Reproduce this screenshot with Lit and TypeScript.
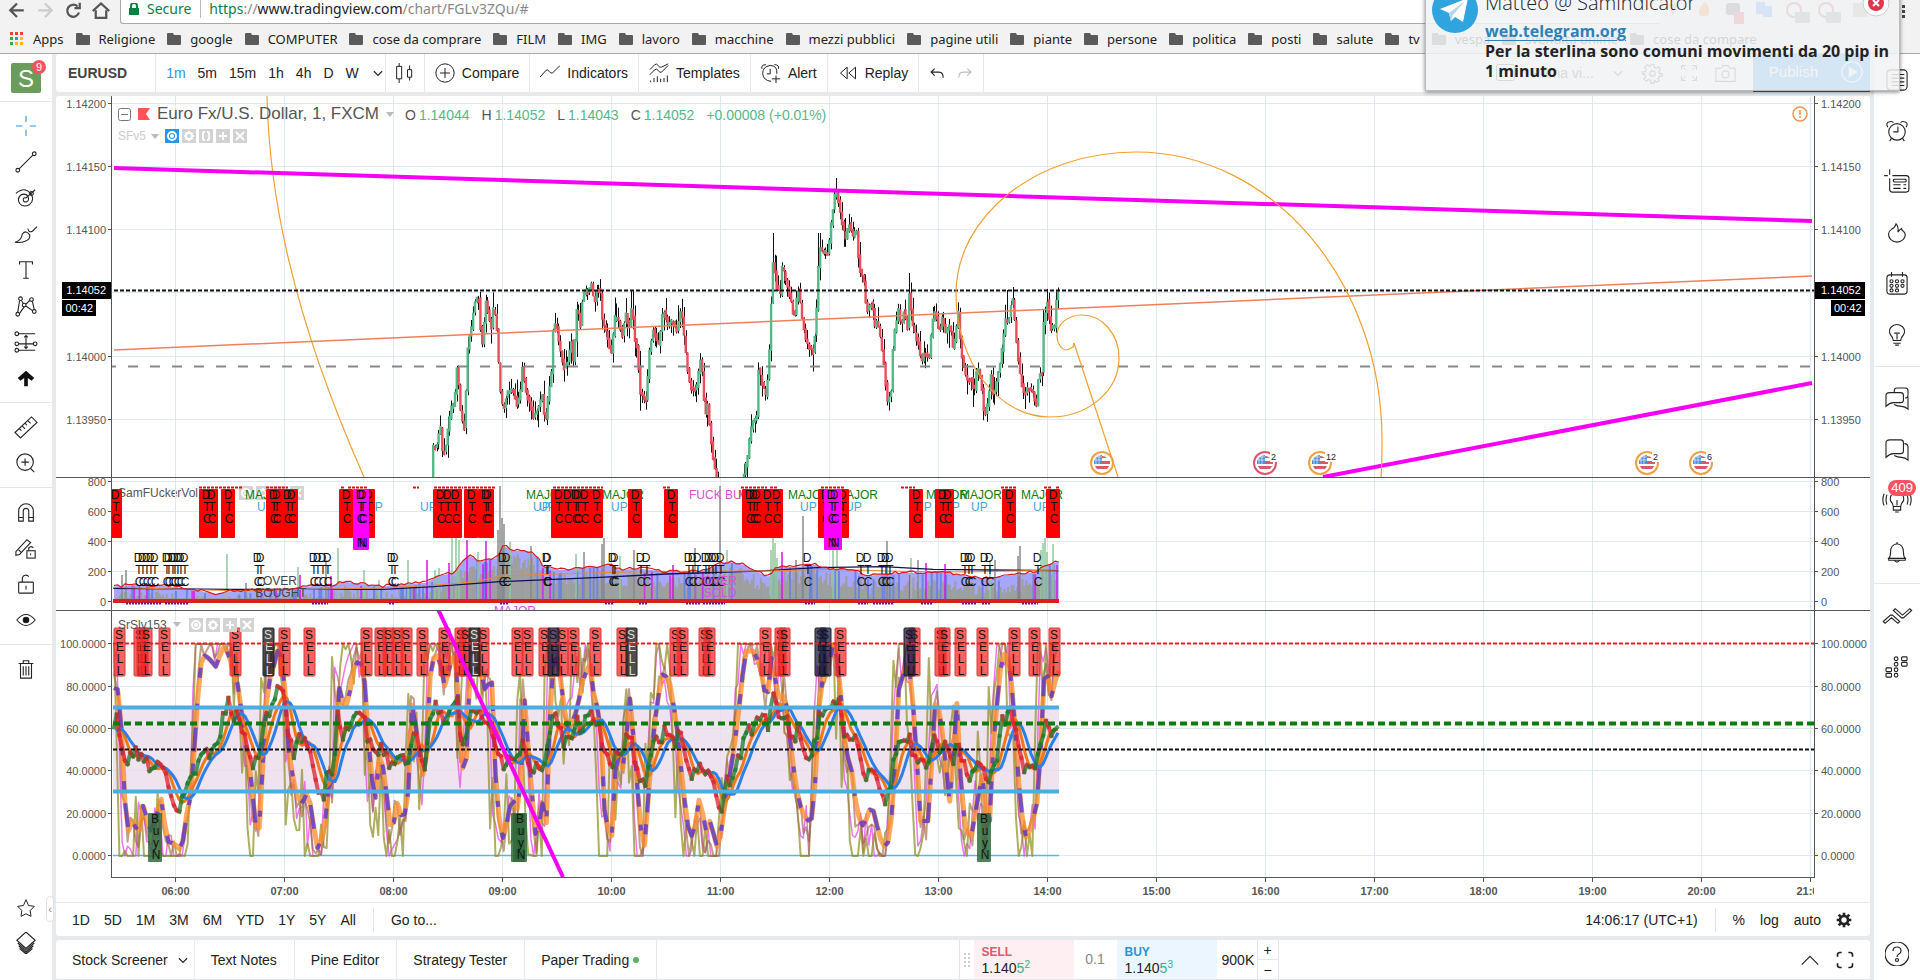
import { LitElement, html, svg, css } from "lit";
import { customElement, property } from "lit/decorators.js";
import { classMap } from "lit/directives/class-map.js";

type Pt = [number, number];

const MINUTE = 109 / 60;
const HOUR_X = Array.from({ length: 16 }, (_, i) => 175.5 + i * 109);
const PLOT_LEFT = 112;
const LAST_X = 1059;

/** Turns a flat list of x, y numbers into points. */
const pairs = (flat: number[]): Pt[] => {
  const out: Pt[] = [];
  for (let i = 0; i < flat.length; i += 2) out.push([flat[i], flat[i + 1]]);
  return out;
};

/** Indicator series are stored on a grid three times finer than the plot. */
const fine = (flat: number[], start: number): Pt[] =>
  pairs(flat).map(([x, y]) => [start + x / 3, 470 + y / 3]);

const sample = (pts: Pt[], x: number): number => {
  if (x <= pts[0][0]) return pts[0][1];
  for (let i = 1; i < pts.length; i++) {
    if (x <= pts[i][0]) {
      const [ax, ay] = pts[i - 1];
      const [bx, by] = pts[i];
      return ay + ((by - ay) * (x - ax)) / (bx - ax || 1);
    }
  }
  return pts[pts.length - 1][1];
};

/** Repeatable noise in 0..1. */
const noise = (seed: number) => {
  let s = seed;
  return () => {
    s = (s * 1664525 + 1013904223) % 4294967296;
    return s / 4294967296;
  };
};

const toPath = (pts: Pt[]) =>
  pts.map(([x, y], i) => `${i ? "L" : "M"}${x.toFixed(1)} ${y.toFixed(1)}`).join("");

const steps = (from: number, to: number, by: number) => {
  const xs: number[] = [];
  for (let x = from; x <= to; x += by) xs.push(x);
  return xs;
};

/* ---------- price series ---------- */
const PRICE = pairs([
  432,477, 433,447, 436,447, 440,425, 442,452, 445,450, 448,427, 451,408, 454,405, 457,363, 460,410, 463,427, 465,427,
  466,375, 468,340, 471,330, 474,302, 479,298, 481,345, 483,342, 485,298, 488,313, 491,328, 493,310, 496,318, 498,357,
  500,390, 503,412, 506,395, 510,390, 513,390, 517,405, 520,393, 522,367, 526,393, 531,407, 533,417, 538,407, 542,395,
  545,425, 548,395, 552,367, 553,327, 556,323, 559,347, 564,368, 568,360, 571,340, 573,362, 575,337, 577,303, 580,327,
  582,300, 585,290, 588,292, 591,284, 594,305, 597,287, 600,292, 602,320, 606,333, 611,353, 615,315, 619,323, 622,335,
  625,312, 629,327, 632,302, 634,337, 637,348, 640,393, 646,400, 649,352, 653,328, 658,347, 663,308, 667,323, 673,322,
  676,332, 681,308, 684,340, 687,367, 690,387, 696,390, 700,360, 702,373, 705,418, 707,402, 710,433, 713,460, 716,477,
  722,520, 738,520, 743,477, 747,460, 750,432, 754,417, 756,427, 758,368, 761,380, 766,398, 769,352, 771,300, 773,257,
  776,285, 780,295, 782,265, 786,283, 790,297, 794,318, 798,288, 802,320, 806,343, 813,352, 816,317, 819,247, 823,253,
  828,253, 831,223, 834,197, 837,193, 840,213, 845,240, 849,223, 853,238, 856,228, 859,267, 864,283, 866,312, 872,300,
  874,328, 877,320, 881,345, 884,367, 887,402, 891,390, 893,340, 898,310, 901,327, 904,307, 907,330, 909,293, 913,330,
  918,342, 921,363, 924,352, 929,357, 932,323, 935,310, 939,333, 942,317, 945,333, 950,325, 953,352, 958,313, 961,353,
  966,380, 971,378, 974,393, 977,367, 981,380, 983,407, 986,415, 991,373, 993,398, 997,377, 1001,357, 1005,320, 1008,322,
  1012,295, 1016,340, 1020,377, 1024,395, 1028,387, 1033,393, 1036,407, 1039,363, 1041,390, 1043,327, 1047,300, 1050,328,
  1055,327, 1056,300, 1058,292,
]);

const TALL_WICKS: Record<number, number> = { 773: 233, 837: 178, 819: 233, 909: 273, 632: 290, 1012: 287, 1047: 289, 1007: 290 };

const candles = () => {
  const rnd = noise(11);
  const sticks = steps(433, 1058, MINUTE).map((x) => {
    const open = sample(PRICE, x - MINUTE);
    const close = sample(PRICE, x) + (rnd() - 0.5) * 5;
    const top = Math.min(open, close) - 1;
    const h = Math.max(4, Math.abs(open - close) + 2);
    let hi = top - rnd() * rnd() * 18;
    const lo = top + h + rnd() * rnd() * 18;
    for (const k of Object.keys(TALL_WICKS)) if (Math.abs(Number(k) - x) < 1) hi = Math.min(hi, TALL_WICKS[Number(k)]);
    return { x, top, h, hi, lo, up: close < open };
  });
  return svg`
    ${sticks.map((s) => svg`<path class="wick" d="M${Math.round(s.x) + 0.5} ${s.hi.toFixed(1)}V${s.lo.toFixed(1)}"></path>`)}
    ${sticks.map((s) => svg`<rect class=${s.up ? "up" : "down"} x=${(s.x - 1).toFixed(1)} y=${s.top.toFixed(1)} width="2.400" height=${s.h.toFixed(1)}></rect>`)}`;
};

const SPIRAL =
  "M1381 477C1382 465 1382 452 1382 440C1382 281 1272 152 1136 152C1036 152 956 216 956 294C956 362 998 417 1050 417" +
  "C1088 417 1119 391 1119 358C1119 334 1102 315 1082 315C1068 315 1057 324 1057 335C1057 343 1061 350 1067 350L1073 347L1074 343";

/* ---------- volume pane ---------- */
const VOLUME: Pt[] = [
  ...fine([40,350,100,345,200,348,300,362,345,373,400,362,550,360,600,350,700,345,730,335,850,350,880,345,980,338,1010,318,
    1060,310,1090,270,1110,258,1140,275,1190,265,1210,228,1240,240,1290,245,1310,260,1330,290,1380,300,1450,293,1500,290], 100),
  ...fine([30,285,60,300,110,295,200,305,300,305,380,275,420,280,480,310,510,322,530,290,600,290,640,282,700,300,760,300,
    800,318,870,310,950,308,1030,305,1090,318,1150,325,1240,315,1310,305,1340,285,1375,275], 600),
];
const SLOW_VOLUME: Pt[] = [
  ...fine([40,355,400,358,850,358,1000,350,1200,335,1500,322], 100),
  ...fine([200,312,500,302,650,293,850,290,1000,298,1375,302], 600),
];
const MID_VOLUME: Pt[] = [
  ...fine([40,352,400,362,850,354,1000,346,1130,335,1200,318,1500,308], 100),
  ...fine([200,304,500,303,700,298,900,304,1100,306,1375,300], 600),
];
const SPIKES: [number, number, string][] = [
  [500,486,"grey"],[498,530,"grey"],[502,518,"grey"],[504,524,"grey"],[720,486,"grey"],[803,516,"grey"],[122,575,"grey"],[126,570,"grey"],
  [227,554,"green"],[246,583,"grey"],[298,567,"green"],[338,548,"green"],[364,570,"green"],[379,580,"green"],[408,560,"green"],[427,560,"mag"],
  [435,570,"green"],[439,568,"green"],[452,538,"green"],[456,534,"green"],[459,540,"green"],[467,540,"mag"],[486,541,"mag"],[478,552,"green"],
  [510,542,"green"],[531,546,"grey"],[576,554,"green"],[584,552,"grey"],[326,560,"grey"],[331,576,"mag"],[449,563,"mag"],[300,575,"mag"],
  [602,544,"grey"],[604,538,"grey"],[620,556,"green"],[634,550,"grey"],[673,565,"mag"],[695,548,"grey"],[727,550,"green"],[771,550,"green"],
  [773,538,"green"],[775,543,"green"],[777,558,"green"],[782,552,"mag"],[796,560,"grey"],[833,546,"green"],[837,550,"green"],[887,541,"grey"],
  [911,558,"green"],[918,560,"grey"],[945,564,"mag"],[926,563,"mag"],[1018,556,"grey"],[1020,546,"grey"],[1041,550,"green"],[1043,543,"green"],
  [1045,538,"green"],[1047,552,"green"],[1053,544,"green"],[990,560,"green"],[995,560,"grey"],
];
const RED_RUNS = pairs([199,242,266,288,341,344,348,368,413,419,434,463,464,495,553,603,663,671,741,767,770,778,821,844,901,915,1001,1016,1044,1052,1056,1060]);
const NAVY_RUNS = pairs([126,162,165,188,312,328,389,395,500,508,605,614,639,648,686,700,703,725,805,815,858,868,873,893,921,933,962,976,982,990,1022,1038]);
const runs = (list: Pt[], y: number) => list.map(([a, b]) => `M${a} ${y}H${b}`).join("");

const RED_DTC = [115,206,211,228,273,276,287,291,346,368,440,447,455,471,485,487,558,567,575,577,584,596,635,671,749,753,756,767,776,825,842,916,942,947,1009,1053];
const PLAIN_DTC = [138,142,146,150,154,166,168,172,174,177,180,184,257,260,313,317,322,327,391,394,502,506,546,547,612,614,640,646,688,692,697,705,708,712,715,720,807,860,867,881,885,889,964,968,971,984,989,1037];
const MAJOR_UP: [string, number, string][] = [
  ["MAJOR",245,"major"],["MAJOR",526,"major"],["MAJOR",602,"major"],["M",738,"major"],["MAJOR",788,"major"],["MAJOR",836,"major"],
  ["MAJOR",926,"major"],["MAJOR",960,"major"],["MAJOR",1021,"major"],["FUCK BU",689,"violet"],
];
const UPS = [257,366,420,533,539,611,800,845,915,943,971,1033];

const stack = (letters: string, x: number, y: number, cls: string, pitch = 12) =>
  [...letters].map((c, i) => svg`<text class=${cls} x=${x + (i ? 1 : 0)} y=${y + i * pitch}>${c}</text>`);

const volumeBars = () => {
  const rnd = noise(5);
  return steps(115, 1057, MINUTE).map((x) => {
    const env = sample(VOLUME, x);
    const r = rnd();
    const cls = r > 0.975 ? "mag" : r > 0.8 ? "blue" : "olive";
    const top = cls === "olive" ? env + 4 + rnd() * 14 : env + rnd() * 4;
    return svg`<rect class="bar ${cls}" x=${x.toFixed(1)} y=${Math.min(top, 598).toFixed(1)} width="2" height=${Math.max(3, 602 - top).toFixed(1)}></rect>`;
  });
};

/* ---------- oscillator pane ---------- */
const SIGNAL: Pt[] = [
  ...fine([42,780,50,735,60,800,70,850,80,870,95,850,110,840,130,870,150,890,160,910,180,870,195,920,215,980,240,1015,250,960,
    270,940,285,900,300,850,320,850,345,840,358,790,370,740,380,720,385,680,395,730,410,730,425,780,440,820,455,870,470,880,
    480,850,490,790,500,720,510,740,525,690,540,640,550,680,560,750,575,820,585,850,595,810,620,810,635,860,650,940,675,970,
    685,870,700,930,712,720,730,790,750,760,765,750,785,710,800,790,815,810,830,850,850,830,865,880,880,900,890,850,905,850,
    925,890,940,790,950,810,975,880,990,740,1000,715,1020,710,1030,760,1050,720,1070,680,1085,820,1100,770,1110,720,1135,705,
    1150,760,1170,750,1190,830,1210,900,1230,860,1250,880,1265,820,1285,870,1300,900,1320,870,1335,900,1350,780,1365,730,
    1380,770,1395,820,1410,800,1430,750,1440,780,1460,740,1480,740,1500,760], 100),
  ...fine([10,850,35,890,45,820,65,840,80,800,90,790,105,870,125,935,137,935,150,850,165,810,180,820,190,780,205,805,230,820,
    238,780,255,870,275,930,290,900,300,870,315,930,330,900,345,960,360,1040,375,960,380,910,395,940,415,870,435,800,455,770,
    465,780,475,720,490,750,505,760,515,660,540,730,550,715,565,770,585,800,595,770,610,850,635,865,650,800,660,715,680,740,
    700,680,715,690,730,780,750,790,770,820,785,890,800,920,820,900,835,930,860,1000,875,920,885,850,900,820,925,800,945,850,
    965,890,985,870,1000,800,1020,830,1045,820,1060,880,1075,800,1090,880,1110,915,1120,920,1130,860,1145,890,1160,940,
    1175,880,1190,870,1205,760,1230,720,1245,780,1260,860,1275,910,1295,880,1310,890,1325,800,1340,750,1358,800,1372,760], 600),
];
const STOCH: Pt[] = [
  ...fine([45,650,60,660,70,950,85,1080,100,1040,115,1100,130,1000,150,1080,165,1050,185,980,200,1110,225,1120,245,1140,260,1030,
    275,960,290,720,300,590,310,550,330,565,350,590,365,530,385,540,400,610,418,650,430,790,450,880,465,1060,478,1070,490,850,
    503,640,520,590,535,530,550,580,565,830,585,960,605,1000,625,960,640,1060,655,1145,675,1060,690,900,702,960,715,640,
    735,720,750,660,765,570,785,580,795,640,810,880,825,1000,840,830,855,930,875,1100,890,990,910,1055,925,960,938,650,
    950,800,975,950,990,620,1005,540,1020,570,1035,650,1055,560,1070,560,1085,900,1100,860,1110,600,1140,590,1155,660,
    1175,620,1190,1000,1210,1110,1235,980,1260,1030,1270,640,1290,900,1310,1130,1325,980,1340,1060,1355,570,1375,560,
    1390,700,1405,780,1430,720,1450,620,1470,580,1485,700], 100),
  ...fine([0,720,15,1050,35,1100,50,830,70,900,90,680,105,850,120,1060,135,1130,150,900,170,700,190,600,210,640,230,760,250,960,
    270,1110,290,1050,300,960,315,1090,330,1050,355,1140,380,960,400,850,420,690,435,540,460,540,480,580,500,700,515,560,
    535,680,555,670,575,850,595,990,620,1050,640,1040,650,850,660,640,680,610,700,520,715,580,735,830,755,900,770,1020,
    790,1070,815,1000,840,1100,860,1140,880,1000,895,660,925,560,945,760,960,1050,985,1050,1005,700,1020,720,1050,1000,
    1072,680,1085,1000,1110,1120,1130,1000,1150,900,1165,1130,1180,820,1200,600,1215,540,1230,580,1250,830,1260,1000,
    1280,1110,1300,1040,1315,980,1335,570,1355,680,1372,600], 600),
];

const SELLS: [number, string][] = [
  ...[119,139,142,146,164,235,284,309,366,380,388,397,406,422,444,460,465,483,517,527,544,562,573,595,622,675,682,704,709,765,
    780,784,840,914,940,944,960,982,1014,1034,1054].map((x): [number, string] => [x, "sell"]),
  [268,"sell black"],[474,"sell black"],[553,"sell navy"],[631,"sell black"],[820,"sell navy"],[825,"sell navy"],[909,"sell navy"],
];
const BUYS = [155, 518, 520, 984];

const fastLine = (seed: number, lead: number, gain: number, jitter: number): Pt[] => {
  const rnd = noise(seed);
  return steps(114, LAST_X, MINUTE * 1.5).map((x): Pt => {
    const y = 748 + (sample(STOCH, x + lead) - 748) * gain + (rnd() - 0.5) * jitter;
    return [x, Math.max(643, Math.min(855, y))];
  });
};

const average = (x: number, back: number): number => {
  let sum = 0;
  for (let i = 0; i < 12; i++) sum += sample(SIGNAL, x - (back * i) / 12);
  return sum / 12;
};

const signalSegments = () => {
  const rnd = noise(23);
  const pts = steps(114, LAST_X, MINUTE * 1.5).map((x): Pt => [x, sample(SIGNAL, x) + (rnd() - 0.5) * 14]);
  return pts.slice(1).map((p, i) =>
    svg`<path class=${p[1] < pts[i][1] ? "signal rise" : "signal fall"} d=${toPath([pts[i], p])}></path>`);
};

const PRICES: [string, number][] = [["1.14200",104],["1.14150",167],["1.14100",230],["1.14000",357],["1.13950",420]];
const VOLS: [string, number][] = [["800",482],["600",512],["400",542],["200",572],["0",602]];
const OSCS: [string, number][] = [["100.0000",643],["80.0000",686],["60.0000",728],["40.0000",770],["20.0000",813],["0.0000",855]];

const axis = (side: "left" | "right", ticks: [string, number][], top: number, priceTag = false) => svg`
  <g transform="translate(0 ${-top})">
    ${ticks.map(([t, y]) => side === "left"
      ? svg`<text class="tick end" x="50" y=${y + 4}>${t}</text><path class="mark" d="M52 ${y - 0.5}h3"></path>`
      : svg`<text class="tick" x="6" y=${y + 4}>${t}</text><path class="mark" d="M0 ${y - 0.5}h3"></path>`)}
    ${priceTag
      ? side === "left"
        ? svg`<path d="M6 282h49v17H6zM6 300h34v16H6z"></path><text class="tick end tag" x="50" y="294">1.14052</text><text class="tick end tag" x="37" y="312">00:42</text>`
        : svg`<path d="M0 282h50v17H0zM16 300h34v16H16z"></path><text class="tick tag" x="6" y="294">1.14052</text><text class="tick tag" x="19" y="312">00:42</text>`
      : ""}
  </g>`;

const grid = (ys: number[], top: number, bottom: number) => svg`
  ${HOUR_X.map((x) => svg`<path class="grid" d="M${x} ${top}V${bottom}"></path>`)}
  ${ys.map((y) => svg`<path class="grid" d="M112 ${y - 0.5}H4000"></path>`)}`;

const event = (x: number, count: string, color: string) => svg`
  <g transform="translate(${x} 463)">
    <circle r="11" fill="#fff" stroke=${color} stroke-width="2"></circle>
    <circle r="8" fill="#fff"></circle>
    <path fill="#d75a68" d="M0-7a7 7 0 0 1 5 2H0zM0-2h8v3H0zM-7 3H7a8 8 0 0 1-2 3H-5a8 8 0 0 1-2-3z"></path>
    <path fill="#4a8fd8" d="M0-8V1H-8A8 8 0 0 1 0-8z"></path>
    <path stroke="#fff" stroke-width="0.600" d="M-7-3H0M-5-6H0M-3-8V1M-6-5V1"></path>
    ${count ? svg`<rect x="5" y="-12" width=${count.length * 6 + 3} height="11" fill="#fff"></rect><text class="count" x="6" y="-3">${count}</text>` : ""}
  </g>`;

const MINI: Record<string, unknown> = {
  eye: svg`<circle cx="7" cy="7" r="4"></circle><circle cx="7" cy="7" r="1"></circle>`,
  gear: svg`<circle cx="7" cy="7" r="3"></circle><path d="M7 2v2M7 10v2M2 7h2M10 7h2M3.5 3.5l1.4 1.4M9 9l1.4 1.4M3.5 10.500l1.400-1.400M9 5l1.400-1.400"></path>`,
  code: svg`<path d="M6 3H5Q4 3 4 5T3 7Q4 7 4 9T5 11H6M8 3H9Q10 3 10 5T11 7Q10 7 10 9T9 11H8"></path>`,
  plus: svg`<path d="M7 3v8M3 7h8"></path>`,
  close: svg`<path d="M3 3l8 8M11 3l-8 8"></path>`,
};
const mini = (names: string[], first = "") =>
  names.map((n, i) => html`<button class=${classMap({ mini: true, on: i === 0 && first === "on" })} aria-label=${n}><svg width="14" height="14">${MINI[n]}</svg></button>`);

@customElement("trading-chart")
export class TradingChart extends LitElement {
  static styles = css`
    :host { display: flex; flex-direction: column; flex: 1; min-height: 0; background: #fff; font-family: "Liberation Sans", Arial, sans-serif; }
    .pane { display: flex; position: relative; min-height: 0; border-bottom: 1px solid #555; box-sizing: border-box; }
    .price { flex: 382 1 0; } .volume { flex: 132 1 0; } .osc { flex: 268 1 0; }
    .osc { border-bottom: 0; }
    svg { display: block; overflow: hidden; }
    .axis { width: 55px; height: 100%; flex: none; border: 0 solid #555; }
    .axis.left { border-right-width: 1px; }
    .axis.right { border-left-width: 1px; }
    .plot { flex: 1; min-width: 0; height: 100%; width: 0; }
    .volume .plot { position: relative; z-index: 1; }
    .osc .plot { border-bottom: 1px solid #555; box-sizing: border-box; }
    .tick { font-size: 11px; fill: #555; }
    .end { text-anchor: end; }
    .tag { fill: #fff; }
    .mark { stroke: #555; }
    .grid { stroke: #dfeaf0; fill: none; }
    .wick { stroke: #111; stroke-width: 1; }
    .up { fill: #53b987; } .down { fill: #eb4d5c; }
    .spiral { fill: none; stroke: #f0a030; stroke-width: 1.2; }
    .magenta { stroke: #f500f5; stroke-width: 4; fill: none; }
    .count { font-size: 9px; fill: #222; }
    .bar { opacity: 0.75; }
    .olive { fill: #9c9c80; } .blue { fill: #5b78d8; } .mag { fill: #d416e0; } .grey { fill: #8a8a8a; } .green { fill: #8fc79a; }
    .letter { font-size: 12px; fill: #111; text-anchor: middle; }
    .white { fill: #ddd; }
    .word { font-size: 12px; }
    .major { fill: #0c7c0c; } .upw { fill: #42a5d8; } .violet { fill: #d64fe0; } .dim { fill: #444; }
    .mid { text-anchor: middle; }
    .sell { fill: #ff2424; fill-opacity: 0.72; stroke: #d93a3a; }
    .black { fill: #222; fill-opacity: 0.8; stroke: #222; } .navy { fill: #1b1b48; fill-opacity: 0.75; stroke: #222; }
    .signal { stroke-width: 4; stroke-linecap: square; fill: none; opacity: 0.75; }
    .rise { stroke: #1a7a2a; } .fall { stroke: #dc202c; }
    .line { fill: none; stroke-linejoin: round; }
    .legend { position: absolute; left: 62px; display: flex; align-items: center; color: #555; }
    .price .legend { top: 9px; gap: 7px; font-size: 14px; }
    .price .legend.second { top: 33px; gap: 5px; }
    .legend h2 { margin: 0; font-size: 17px; line-height: 18px; font-weight: 400; }
    .legend .sub { font-size: 12px; line-height: 14px; }
    .faded { color: #ccc; }
    .volume .legend { top: 8px; } .osc .legend { top: 7px; }
    .mini { width: 14px; height: 14px; padding: 0; border: 0; margin-right: 3px; background: #d3d3d3; display: block; }
    .mini.on { background: #2a94e8; }
    .mini svg { stroke: #fff; fill: none; stroke-width: 2; }
    .tools { display: flex; margin-left: 1px; }
    .osc .tools { margin-left: 8px; }
    .volume .tools { margin-left: 27px; }
    .tri { width: 0; height: 0; border: 4px solid transparent; border-top: 5px solid #bbb; border-bottom: 0; }
    .sub + .tri { margin-left: 6px; }
    .second .sub + .tri { margin-left: 0; }
    .ohlc { display: flex; margin: 2px 0 0 4px; gap: 12px; line-height: 16px; }
    .ohlc b { font-weight: 400; color: #53b987; }
    .ohlc span b { margin-left: 3px; }
    .warn { position: absolute; right: 61px; top: 9px; }
    .time { display: flex; height: 24px; flex: none; }
    .time svg { width: 100%; height: 24px; margin: 0 56px; }
    .time text { font-size: 11px; font-weight: 700; fill: #555; text-anchor: middle; }
  `;

  render() {
    const env = steps(114, LAST_X, MINUTE * 2).map((x): Pt => [x, sample(VOLUME, x)]);
    const rnd = noise(9);
    const envLine = env.map(([x, y]): Pt => [x, y + (rnd() - 0.6) * 3]);
    const stoch = steps(114, LAST_X, MINUTE * 2).map((x): Pt => [x, sample(STOCH, x)]);
    return html`
      <section class="pane price">
        <svg class="axis left">${axis("left", PRICES, 96, true)}</svg>
        <svg class="plot"><g transform="translate(${-PLOT_LEFT} -96)">
          ${grid([104, 167, 230, 293, 357, 420], 96, 480)}
          <path class="spiral" d="M267 96C269 190 290 310 364 477"></path>
          ${candles()}
          <path d="M114 350L1812 276" stroke="#f0805c" stroke-width="1.500"></path>
          <path d="M114 290.500H4000" stroke="#111" stroke-width="2" stroke-dasharray="4 2"></path>
          <path d="M106 366.500H1810" stroke="#888" stroke-width="2" stroke-dasharray="10 12"></path>
          <path class="magenta" d="M114 168L1812 221M1323 477L1812 383"></path>
          <path class="spiral" d=${SPIRAL}></path>
          <path class="spiral" d="M1074 343L1118 477"></path>
          ${event(1102, "", "#f0a040")}${event(1265, "2", "#e0506c")}${event(1320, "12", "#f0a040")}${event(1647, "2", "#f0a040")}${event(1701, "6", "#f0a040")}
        </g></svg>
        <svg class="axis right">${axis("right", PRICES, 96, true)}</svg>
        <div class="legend">
          <svg width="13" height="13" stroke="#777" fill="none"><rect x="0.500" y="0.500" width="12" height="12" rx="2"></rect><path d="M3 6.500h7"></path></svg>
          <svg width="12" height="12"><path fill="#f55" d="M0 0h12l-4 6 4 6H0z"></path></svg>
          <h2>Euro Fx/U.S. Dollar, 1, FXCM</h2><span class="tri"></span>
          <div class="ohlc">
            <span>O<b>1.14044</b></span><span>H<b>1.14052</b></span><span>L<b>1.14043</b></span><span>C<b>1.14052</b></span><b>+0.00008 (+0.01%)</b>
          </div>
        </div>
        <div class="legend second"><span class="sub faded">SFv5</span><span class="tri"></span><span class="tools">${mini(["eye", "gear", "code", "plus", "close"], "on")}</span></div>
        <svg class="warn" width="18" height="18" fill="none" stroke="#f5924e" stroke-width="1.500"><circle cx="9" cy="9" r="7"></circle><path d="M9 5v5M9 11v2"></path></svg>
      </section>

      <section class="pane volume">
        <svg class="axis left">${axis("left", VOLS, 478)}</svg>
        <svg class="plot"><g transform="translate(${-PLOT_LEFT} -478)">
          ${grid([482, 512, 542, 572, 602], 478, 612)}
          <path d="${toPath(env)}V602H114z" fill="#8080ff" fill-opacity="0.700"></path>
          ${volumeBars()}
          ${SPIKES.map(([x, y, c]) => svg`<rect class="bar ${c}" x=${x - 1} y=${y} width="2" height=${602 - y}></rect>`)}
          <path class="line" d=${toPath(SLOW_VOLUME)} stroke="#111155" stroke-width="1.300"></path>
          <path class="line" d=${toPath(MID_VOLUME)} stroke="#e88a30"></path>
          <path class="line" d=${toPath(envLine)} stroke="#d81a1a" stroke-width="1.200"></path>
          <path d="M113 601H${LAST_X}" stroke="#dc2018" stroke-width="4"></path>
          <path d=${runs(NAVY_RUNS, 603.5)} stroke="#4a20a0" stroke-width="2" stroke-dasharray="2 1"></path>
          ${MAJOR_UP.map(([t, x, c]) => svg`<text class="word ${c}" x=${x} y="499">${t}</text>`)}
          ${UPS.map((x) => svg`<text class="word upw" x=${x} y="511">UP</text>`)}
          <path d=${runs(RED_RUNS, 487.5)} stroke="#e81010" stroke-width="2" stroke-dasharray="3 1"></path>
          ${RED_DTC.map((x) => svg`<rect x=${x - 7} y="489" width="14" height="49" rx="1" fill="#f00"></rect>`)}
          ${RED_DTC.map((x) => stack("DTC", x, 499, "letter"))}
          <rect x="353" y="489" width="16" height="61" rx="1" fill="#f0f"></rect><rect x="824" y="489" width="18" height="61" rx="1" fill="#f0f"></rect>
          ${[360, 362, 831, 834].map((x) => stack("DTC N", x, 499, "letter"))}
          ${PLAIN_DTC.map((x) => stack("DTC", x, 562, "letter"))}
          <text class="word dim mid" x="280" y="585">OVER</text><text class="word dim mid" x="281" y="597">BOUGHT</text>
          <text class="word violet mid" x="720" y="585">OVER</text><text class="word violet mid" x="720" y="597">SOLD</text>
          <text class="word violet mid" x="515" y="615">MAJOR</text>
        </g></svg>
        <svg class="axis right">${axis("right", VOLS, 478)}</svg>
        <div class="legend"><span class="sub">SamFUckerVol</span><span class="tri"></span><span class="tools">${mini(["eye", "gear", "plus", "close"])}</span></div>
      </section>

      <section class="pane osc">
        <svg class="axis left">${axis("left", OSCS, 610)}</svg>
        <svg class="plot"><g transform="translate(${-PLOT_LEFT} -610)">
          ${grid([643, 686, 728, 770, 813, 855], 610, 880)}
          <rect x="113" y="707" width=${LAST_X - 113} height="83" fill="#ecdcec" fill-opacity="0.800"></rect>
          <path d="M113 854.500H${LAST_X}" stroke="#5ab8e0" stroke-width="1.500"></path>
          <path class="line" d=${toPath(fastLine(8, 3, 1.2, 60))} stroke="#e83ce8" stroke-width="1.500" opacity="0.700"></path>
          <path class="line" d=${toPath(fastLine(3, 5, 1.5, 130))} stroke="#8c8c1e" stroke-width="2" opacity="0.700"></path>
          <path class="line" d=${toPath(fastLine(4, 1, 1.1, 30))} stroke="#98603c" stroke-width="2" opacity="0.600"></path>
          <path class="line" d=${toPath(stoch)} stroke="#ff8c28" stroke-width="5" opacity="0.750"></path>
          <path class="line" d=${toPath(stoch)} stroke="#3a2ae8" stroke-width="4" stroke-dasharray="10 12 24 18 6 26" opacity="0.700"></path>
          <path class="line" d=${toPath(steps(116, LAST_X, 3).map((x): Pt => [x, average(x, 12)]))} stroke="#f07818" stroke-width="3"></path>
          <path class="line" d=${toPath(steps(116, LAST_X, 3).map((x): Pt => [x, average(x - 2, 18)]))} stroke="#2a80e8" stroke-width="3"></path>
          ${signalSegments()}
          <path d="M113 706.500H${LAST_X}M113 790.500H${LAST_X}" stroke="#4caee0" stroke-width="4"></path>
          ${SELLS.map(([x, c]) => svg`<rect class=${c} x=${x - 5} y="627" width="11" height="48" rx="1"></rect>${stack("SELL", x, 638, c.includes("black") ? "letter white" : "letter")}`)}
          ${BUYS.map((x) => svg`<rect x=${x - 7} y="812" width="14" height="49" rx="1" fill="#2f6a3c" fill-opacity="0.850"></rect>${stack("BuyN", x, 822, "letter")}`)}
          <path d="M113 642.500H4000" stroke="#e82020" stroke-width="2" stroke-dasharray="4 2"></path>
          <path d="M113 722.500H4000" stroke="#0c7c0c" stroke-width="4" stroke-dasharray="7 4"></path>
          <path d="M113 748.500H4000" stroke="#111" stroke-width="2" stroke-dasharray="4 2"></path>
          <path class="magenta" d="M438 608L563 876"></path>
        </g></svg>
        <svg class="axis right">${axis("right", OSCS, 610)}</svg>
        <div class="legend"><span class="sub">SrSlv153</span><span class="tri"></span><span class="tools">${mini(["eye", "gear", "plus", "close"])}</span></div>
      </section>

      <div class="time"><svg><g transform="translate(${-PLOT_LEFT} 0)">
        ${HOUR_X.map((x, i) => svg`<path class="mark" d="M${x} 0v4"></path><text x=${x} y="17">${String(i + 6).padStart(2, "0")}:00</text>`)}
      </g></svg></div>`;
  }
}

/* ---------- icons ---------- */
const pen = (body: unknown, size = 24) =>
  html`<svg width=${size} height=${size} viewBox="0 0 24 24" fill="none" stroke="currentColor" stroke-width="1.200">${body}</svg>`;

const I: Record<string, unknown> = {
  cross: svg`<path stroke="#2a94d8" d="M12 1v7M12 16v7M1 12h7M16 12h7"></path>`,
  trend: svg`<circle cx="3" cy="21" r="2"></circle><circle cx="21" cy="3" r="2"></circle><path d="M4.500 19.500l15-15"></path>`,
  fan: svg`<path d="M1 7Q10-1 17 7Q22 14 16 19Q9 23 5 18Q2 13 6 9Q11 6 14 10Q16 14 13 16Q9 17 9 14Q9 11 12 12L22 3"></path><circle cx="18" cy="7" r="2"></circle>`,
  brush: svg`<path d="M0 21Q7 19 8 12Q12 7 16 13Q17 18 11 20Q6 22 0 21zM14 6Q15 11 19 9L24 4"></path>`,
  text: svg`<path d="M5 6V3h14v3M12 3v18M9 21h6"></path>`,
  pattern: svg`<circle cx="6" cy="4" r="2"></circle><circle cx="18" cy="5" r="2"></circle><circle cx="10" cy="11" r="2"></circle><circle cx="3" cy="21" r="2"></circle><circle cx="21" cy="18" r="2"></circle><path d="M5 6L3 19M7 6l2 3M12 10l4-4M19 7l2 9M5 20l5-7M12 12l7 5"></path>`,
  range: svg`<circle cx="2" cy="3" r="2"></circle><circle cx="2" cy="14" r="2"></circle><circle cx="22" cy="14" r="2"></circle><circle cx="2" cy="21" r="2"></circle><path d="M4 3h18M4 14h16M4 21h18M12 5v14M10 7l2-2 2 2M10 17l2 2 2-2"></path>`,
  arrow: svg`<path fill="#111" stroke="none" d="M12 4l9 8-3 3-4-3v9h-4v-9l-4 3-3-3z"></path>`,
  ruler: svg`<path d="M0 18L18 1l6 6L6 24zM5 14l2 2M8 11l3 3M11 8l2 2M14 5l3 3"></path>`,
  zoom: svg`<circle cx="11" cy="11" r="9"></circle><path d="M11 7v8M7 11h8M17 18l4 4"></path>`,
  magnet: svg`<path d="M4 22V11a8 8 0 0 1 16 0v11h-5V11a3 3 0 0 0-6 0v11zM4 18h5M15 18h5"></path>`,
  drawlock: svg`<path d="M1 16L13 3l4 3L5 19l-4 1zM4 14l3 3"></path><rect x="13" y="15" width="9" height="8"></rect><path d="M15 15v-3q3-3 5 0M17 18v2"></path>`,
  lock: svg`<rect x="4" y="10" width="16" height="12" rx="1"></rect><path d="M8 10V5a4 4 0 0 1 7-1M12 14v4"></path>`,
  eye: svg`<path d="M2 12Q12 0 22 12Q12 24 2 12z"></path><circle cx="12" cy="12" r="3" fill="#111"></circle>`,
  trash: svg`<path d="M4 6h16M9 6V3h6v3M6 6v16h12V6M9 9v10M12 9v10M15 9v10"></path>`,
  star: svg`<path d="M12 2l3 7 7 1-5 5 1 7-6-3-6 3 1-7-5-5 7-1z"></path>`,
  layers: svg`<path d="M12 0l10 9-10 9L2 9zM3 12l9 8 9-8M4 15l8 7 8-7M5 18l7 6 7-6"></path>`,
  list: svg`<rect x="1" y="1" width="22" height="22" rx="4"></rect><path d="M6 6h14M6 10h14M6 14h14M6 18h14"></path>`,
  alarm: svg`<circle cx="12" cy="13" r="9"></circle><path d="M13 7v6H8M2 8Q-1 3 4 2Q7 1 8 3M22 8q3-5-2-6q-3-1-4 1M6 20l-2 3M18 20l2 3"></path>`,
  note: svg`<path d="M4 4V-2M4 12V8M-2 5h4M7 5h15q3 0 3 3v12q0 3-3 3H7q-3 0-3-3V10"></path><rect x="8" y="9" width="14" height="3" rx="1"></rect><path d="M8 15h8M19 15h3M8 19h8M19 19h3"></path>`,
  flame: svg`<path d="M11 2Q14 5 13 11Q15 8 17 7Q17 9 19 10Q23 14 19 19Q12 25 5 19Q0 12 6 8Q10 6 11 2z"></path>`,
  calendar: svg`<rect x="1" y="2" width="22" height="21" rx="3"></rect><path d="M6-1v5M18-1v5"></path><circle cx="6" cy="9" r="1.700"></circle><circle cx="12" cy="9" r="1.700"></circle><circle cx="18" cy="9" r="1.700"></circle><circle cx="6" cy="14" r="1.700"></circle><circle cx="12" cy="14" r="1.700"></circle><circle cx="18" cy="14" r="1.700"></circle><circle cx="6" cy="19" r="1.700"></circle><circle cx="12" cy="19" r="1.700"></circle>`,
  bulb: svg`<path d="M8 18Q8 15 5 12Q2 7 6 3Q12-2 18 3Q22 7 19 12Q16 15 16 18zM8 21h8M10 23h4M12 17v-6M9 10h6"></path>`,
  chats: svg`<path d="M9 5V3q0-3 3-3h9q3 0 3 3v5q0 3-3 3M4 5h12q3 0 3 3v5q0 3-3 3H8q-4 0-8 4V8q0-3 4-3zM9 18q3 2 8 2 4 0 7 3V10"></path>`,
  chat: svg`<path d="M4 1h12q3 0 3 3v9q0 3-3 3H8q-4 0-8 4V4q0-3 4-3zM9 18q3 2 8 2 4 0 7 3V8q-1-3-4-3"></path>`,
  stream: svg`<path d="M8 18Q8 15 5 12Q4 8 6 5M16 18q0-3 3-6 1-4-1-7M8 18h8v4H8zM10 24h4M1 5q-2 6 0 11M23 5q2 6 0 11M-2 4q-3 7 0 13M26 4q3 7 0 13M12 17v-6"></path>`,
  bell: svg`<path d="M2 19h20M3 19Q5 17 5 12Q5 4 12 3Q19 4 19 12Q19 17 21 19v2H3zM12 3V1M9 21q3 4 6 0"></path>`,
  depth: svg`<path d="M-3 18l8-7 2 0 8 7-2 2-7-6-7 6zM10 4l8 7 8-7 2 2-9 8h-2l-9-8z"></path>`,
  dom: svg`<rect x="0" y="13" width="6" height="4" rx="1"></rect><rect x="0" y="19" width="6" height="4" rx="1"></rect><rect x="17" y="1" width="6" height="4" rx="1"></rect><rect x="17" y="7" width="6" height="4" rx="1"></rect><circle cx="11" cy="3" r="2"></circle><circle cx="11" cy="9" r="2"></circle><circle cx="11" cy="15" r="2"></circle><circle cx="11" cy="21" r="2"></circle>`,
  help: svg`<circle cx="12" cy="12" r="12"></circle><path d="M8 9q0-4 4-4t4 4q0 2-2 3t-2 3"></path><circle cx="12" cy="18" r="1.500"></circle>`,
  down: svg`<path stroke-width="2" d="M5 9l7 7 7-7"></path>`,
  up: svg`<path d="M3 17l9-9 9 9"></path>`,
  candles: svg`<path d="M2 4h6v15H2zM5 0v4M5 19v5M15 8h5v9h-5zM17.500 3v5M17.500 17v4"></path>`,
  compare: svg`<circle cx="12" cy="12" r="11"></circle><path d="M12 6v12M6 12h12"></path>`,
  indicators: svg`<path d="M0 17l7-8q2-2 4 1t4 2l9-9"></path>`,
  templates: svg`<path d="M1 8l6-6q2-2 4 1t4 2l8-4M1 14l6-6q2-2 4 1t4 2l8-8M2 23v-2M6 23v-5M10 23v-7M14 23v-4M18 23v-5M22 23v-8"></path>`,
  alert: svg`<path d="M19 13Q20 3 11 3Q2 4 2 13Q3 21 12 22M11 7v6H7M1 7Q0 2 6 2M16 2q6 0 5 5M18 15v9M13 19h10"></path>`,
  replay: svg`<path d="M11 5v14l-8-7zM21 5v14l-8-7z"></path>`,
  undo: svg`<path stroke-width="1.600" d="M8 5L3 10l5 5M3 10h11q6 0 6 8"></path>`,
  redo: svg`<path stroke-width="1.600" d="M16 5l5 5-5 5M21 10H10q-6 0-6 8"></path>`,
  gear: svg`<circle cx="12" cy="12" r="3"></circle><path d="M10 2h4v3l3 1 2-2 2 3-2 2 1 3h3v3h-3l-2 3 2 2-3 2-3-2v3h-4v-3l-3-1-2 2-3-3 2-2-1-3H1v-3h3l1-3-2-2 3-3 3 2z"></path>`,
  cog: svg`<circle cx="12" cy="12" r="6" stroke-width="4"></circle><path stroke-width="4" d="M12 1v4M12 19v4M1 12h4M19 12h4M4 4l3 3M17 17l3 3M4 20l3-3M17 7l3-3"></path>`,
  expand: svg`<path d="M2 8V2h6M2 2l6 6M16 2h6v6M22 2l-6 6M2 16v6h6M2 22l6-6M22 16v6h-6M22 22l-6-6"></path>`,
  camera: svg`<path d="M1 6h6l2-3h6l2 3h6v15H1z"></path><circle cx="12" cy="13" r="4"></circle>`,
  frame: svg`<path stroke-width="2" d="M3 8V6q0-3 3-3h2M16 3h2q3 0 3 3v2M21 16v2q0 3-3 3h-2M8 21H6q-3 0-3-3v-2"></path>`,
  play: svg`<circle cx="12" cy="12" r="11"></circle><path fill="#fff" d="M9 7l8 5-8 5z"></path>`,
};

@customElement("icon-rail")
export class IconRail extends LitElement {
  @property({ type: Array }) groups: string[][] = [];
  @property({ type: Boolean }) wide = false;
  static styles = css`
    :host { display: block; }
    .group { border-bottom: 1px solid #e0e6ea; padding: 6px 0; }
    .group:last-child { border-bottom: 0; }
    .wide .group:first-child { padding-top: 0; }
    button { display: flex; align-items: center; justify-content: center; position: relative; width: 100%; height: 36px; border: 0; background: none; color: #222; padding: 0; }
    .wide button { height: 51px; }
    .count { position: absolute; top: 5px; right: 4px; background: #f7525f; color: #fff; font: 13px/16px "Liberation Sans", Arial, sans-serif; border-radius: 8px; padding: 0 3px; }
    svg { overflow: visible; }
  `;
  render() {
    return html`<div class=${classMap({ wide: this.wide })}>${this.groups.map((g) => html`<div class="group">${g.map((n) =>
      html`<button aria-label=${n}>${pen(I[n], 22)}${n === "stream" ? html`<span class="count">409</span>` : ""}</button>`)}</div>`)}</div>`;
  }
}

const BOOKMARKS = ["Religione", "google", "COMPUTER", "cose da comprare", "FILM", "IMG", "lavoro", "macchine", "mezzi pubblici",
  "pagine utili", "piante", "persone", "politica", "posti", "salute", "tv", "vespa", "svendita online", "cose da compare"];
const DOT_COLORS = ["#ea4335", "#ea4335", "#ea4335", "#34a853", "#4285f4", "#fbbc05", "#34a853", "#fbbc05", "#fbbc05"];

@customElement("browser-bar")
export class BrowserBar extends LitElement {
  static styles = css`
    :host { display: block; background: #f2f2f2; font-family: "Noto Sans", sans-serif; color: #222; }
    .top { display: flex; height: 24px; }
    .nav { width: 120px; box-sizing: border-box; display: flex; gap: 8px; padding: 2px 7px 0; }
    .nav button { width: 20px; height: 18px; border: 0; padding: 0; background: none; color: #555; }
    .nav button:nth-child(2) { color: #ccc; }
    .omni { flex: 1; min-width: 0; background: #fff; border: solid #aaa; border-width: 0 0 1px 1px; border-radius: 0 0 0 3px; display: flex; align-items: center; gap: 8px; padding: 0 8px 5px; box-sizing: border-box; font-size: 14px; line-height: 18px; }
    .secure { color: #0b8043; padding-right: 9px; border-right: 1px solid #bbb; }
    .url { color: #888; } .url i { font-style: normal; color: #0b8043; } .url b { font-weight: 400; color: #222; }
    .ext { width: 260px; display: flex; align-items: center; justify-content: space-between; padding: 0 14px 0 8px; box-sizing: border-box; }
    .marks { display: flex; height: 30px; box-sizing: border-box; align-items: center; border-bottom: 1px solid #aaa; padding: 0 10px; gap: 12px; overflow: hidden; font-size: 13px; white-space: nowrap; }
    .marks a { color: #222; text-decoration: none; display: flex; align-items: center; gap: 9px; flex: none; line-height: 18px; }
    .marks svg { flex: none; }
  `;
  render() {
    return html`
      <div class="top">
        <nav class="nav">
          <button aria-label="Back">${pen(svg`<path stroke-width="3" d="M21 11H4M12 2l-9 9 9 9"></path>`, 18)}</button>
          <button aria-label="Forward">${pen(svg`<path stroke-width="3" d="M3 11h17M12 2l9 9-9 9"></path>`, 18)}</button>
          <button aria-label="Reload">${pen(svg`<path stroke-width="3" d="M20 14a8 8 0 1 1-2-8M21 1v7h-7"></path>`, 18)}</button>
          <button aria-label="Home">${pen(svg`<path stroke-width="3" d="M1 12L12 2l11 10M5 11v10h14V11"></path>`, 18)}</button>
        </nav>
        <div class="omni">
          <svg width="10" height="12"><path fill="#0b8043" d="M0 5h10v7H0z"></path><path fill="none" stroke="#0b8043" stroke-width="2" d="M2 5V3a3 3 0 0 1 6 0v2"></path></svg>
          <span class="secure">Secure</span>
          <span class="url"><i>https</i>://<b>www.tradingview.com</b>/chart/FGLv3ZQu/#</span>
        </div>
        <div class="ext">
          <svg width="215" height="24"><path fill="#e88" d="M0 4h10l-5 12z"></path><path fill="#f80" d="M37 2q7 7 3 14h-8q-4-6 5-14z"></path><rect x="58" y="3" width="14" height="12" rx="3" fill="#555"></rect><rect x="66" y="12" width="10" height="12" fill="#e33"></rect><path fill="#48f" d="M88 2h9v12h-9zM95 6h9v11h-9z"></path><circle cx="126" cy="10" r="7" fill="none" stroke="#d33" stroke-width="2"></circle><rect x="127" y="12" width="15" height="11" fill="#888"></rect><circle cx="158" cy="10" r="7" fill="none" stroke="#d33" stroke-width="2"></circle><rect x="158" y="12" width="15" height="11" fill="#888"></rect><rect x="185" y="3" width="14" height="14" fill="#b99"></rect></svg>
          <svg width="4" height="20" fill="#444"><rect y="3" width="3" height="3"></rect><rect y="8" width="3" height="3"></rect><rect y="13" width="3" height="3"></rect></svg>
        </div>
      </div>
      <nav class="marks">
        <a href="#"><svg width="14" height="14">${DOT_COLORS.map((c, i) => svg`<rect x=${(i % 3) * 5} y=${Math.floor(i / 3) * 5} width="3" height="3" fill=${c}></rect>`)}</svg>Apps</a>
        ${BOOKMARKS.map((b) => html`<a href="#"><svg width="14" height="12"><path fill="#5a5a5a" d="M1 0h5l1 2h6q1 0 1 1v8q0 1-1 1H1q-1 0-1-1V1q0-1 1-1z"></path></svg>${b}</a>`)}
      </nav>`;
  }
}

@customElement("app-root")
export class AppRoot extends LitElement {
  static styles = css`
    :host { display: flex; flex-direction: column; height: 100vh; overflow: hidden; position: relative; background: #e6eaed; color: #222; font: 14px/18px "Liberation Sans", Arial, sans-serif; }
    button { font: inherit; color: inherit; background: none; border: 0; padding: 0; margin: 0; white-space: nowrap; }
    svg { display: block; flex: none; }
    .app { flex: 1; min-height: 0; display: grid; grid-template-columns: 52px minmax(0, 1fr) 46px; gap: 4px; }
    .side { background: #fff; display: flex; flex-direction: column; }
    .side.right { padding-bottom: 14px; }
    .logo { height: 48px; padding: 9px 11px 0; box-sizing: border-box; border-bottom: 1px solid #e0e6ea; position: relative; }
    .avatar { width: 30px; height: 30px; background: #6a9c5b; color: #fff; font-size: 24px; line-height: 31px; text-align: center; border-radius: 2px; display: block; }
    .badge { position: absolute; left: 32px; top: 6px; width: 14px; height: 14px; border-radius: 7px; background: #f7525f; color: #fff; font-size: 11px; line-height: 14px; text-align: center; }
    .bottom { margin-top: auto; display: flex; flex-direction: column; align-items: center; gap: 14px; padding-bottom: 26px; }
    .right .bottom { padding-bottom: 0; }
    .main { display: flex; flex-direction: column; gap: 4px; min-width: 0; min-height: 0; }
    .bar { background: #fff; display: flex; height: 38px; flex: none; border-radius: 3px; }
    .cell { display: flex; align-items: center; gap: 7px; padding: 0 10px; border-right: 1px solid #e6eaed; }
    .symbol { font-weight: 700; color: #444; padding: 0 28px 0 12px; }
    .frames { gap: 12px; padding: 0 0 0 10px; }
    .active { color: #2a94e8; }
    .icon { padding: 0 9px; }
    .hist { gap: 10px; }
    .off { color: #bbb; }
    .tools { margin-left: auto; display: flex; align-items: center; gap: 17px; color: #444; }
    .publish { display: flex; background: #2a94e8; color: #fff; align-self: stretch; border-bottom: 2px solid #1a6cab; box-sizing: border-box; align-items: center; font-size: 15px; }
    .publish button { padding: 0 16px; } .publish button + button { padding: 0 7px; }
    .card { flex: 1; min-height: 0; display: flex; flex-direction: column; background: #fff; border-radius: 3px; overflow: hidden; }
    .ranges { height: 34px; flex: none; display: flex; align-items: center; gap: 14px; padding: 0 18px 0 16px; border-top: 1px solid #e6eaed; box-sizing: border-box; }
    .rule { width: 1px; height: 24px; background: #e0e6ea; margin: 0 3px; }
    .clock { margin-left: auto; }
    .scale { display: flex; align-items: center; gap: 15px; }
    .tabs { height: 40px; border-bottom: 1px solid #e0e6ea; box-sizing: border-box; }
    .tab { padding: 0 17px 0 16px; border-right: 1px solid #e6eaed; display: flex; align-items: center; gap: 8px; }
    .tab:first-child { padding-right: 4px; }
    .dot { width: 6px; height: 6px; border-radius: 3px; background: #5fb060; margin-left: -4px; }
    .grow-a { flex: 11; } .grow-b { flex: 19; }
    .trade { display: flex; border: solid #e0e6ea; border-width: 0 1px; }
    .grip { width: 14px; display: grid; place-items: center; }
    .quote { width: 100px; text-align: left; padding: 0 0 0 8px; box-sizing: border-box; }
    .quote b { display: block; font-size: 12px; line-height: 16px; }
    .quote.sell { background: #fdeff2; } .quote.sell b { color: #f0506c; }
    .quote.buy { background: #ecf6fe; } .quote.buy b { color: #2a94d8; }
    .price { display: flex; line-height: 16px; }
    .price em { font-style: normal; color: #35b091; } .price sup { font-size: 10px; line-height: 10px; color: #35b091; vertical-align: top; }
    .spread { width: 43px; text-align: center; line-height: 38px; color: #888; }
    .qty { width: 40px; border: 0; padding: 0 0 0 5px; font: inherit; color: inherit; box-sizing: border-box; background: none; }
    .step { width: 20px; display: grid; border-left: 1px solid #e0e6ea; }
    .step button + button { border-top: 1px solid #e0e6ea; }
    .end { display: flex; align-items: center; gap: 14px; padding: 0 15px 0 0; }
    .fold { position: absolute; left: 46px; bottom: 58px; width: 8px; height: 26px; background: #fff; border: 1px solid #dde3e7; border-radius: 4px; color: #888; box-sizing: border-box; font-size: 11px; line-height: 24px; }
    .toast { position: absolute; top: -12px; right: 20px; width: 475px; height: 103px; box-sizing: border-box; background: rgba(240, 242, 244, 0.86); border: 1px solid #bbb; box-shadow: 0 1px 4px rgba(0, 0, 0, 0.5); padding: 2px 6px 0 59px; font: 700 16px/20px "Open Sans", "Noto Sans", sans-serif; color: #222; }
    .toast h3 { margin: 0 0 6px; font-size: 20px; line-height: 24px; font-weight: 300; }
    .toast p { margin: 0; }
    .toast a { color: #2f80b8; display: block; text-underline-offset: 3px; }
    .plane { position: absolute; left: 6px; top: -2px; }
    .x { position: absolute; right: 9px; top: 0; }
  `;

  render() {
    const tabs = ["Text Notes", "Pine Editor", "Strategy Tester"];
    return html`
      <browser-bar></browser-bar>
      <div class="app">
        <aside class="side">
          <div class="logo"><span class="avatar">S</span><span class="badge">9</span></div>
          <icon-rail .groups=${[["cross", "trend", "fan", "brush", "text", "pattern", "range", "arrow"], ["ruler", "zoom"], ["magnet", "drawlock", "lock", "eye"], ["trash"]]}></icon-rail>
          <div class="bottom">${pen(I.star, 20)}${pen(I.layers, 22)}</div>
        </aside>
        <main class="main">
          <div class="bar">
            <button class="cell symbol">EURUSD</button>
            <div class="cell frames"><button class="active">1m</button><button>5m</button><button>15m</button><button>1h</button><button>4h</button><button>D</button><button>W</button>${pen(I.down, 14)}</div>
            <button class="cell icon" aria-label="Bar style">${pen(I.candles, 20)}</button>
            <button class="cell">${pen(I.compare, 20)}Compare</button>
            <button class="cell">${pen(I.indicators, 20)}Indicators</button>
            <button class="cell">${pen(I.templates, 20)}Templates</button>
            <button class="cell">${pen(I.alert, 20)}Alert</button>
            <button class="cell">${pen(I.replay, 20)}Replay</button>
            <div class="cell hist"><button aria-label="Undo">${pen(I.undo, 17)}</button><button class="off" aria-label="Redo">${pen(I.redo, 17)}</button></div>
            <div class="tools">
              <svg width="19" height="19" fill="none" stroke="#444"><rect x="0.500" y="0.500" width="18" height="16" rx="2"></rect></svg>
              <span>Prima vi...</span>${pen(I.down, 14)}${pen(I.gear, 21)}${pen(I.expand, 18)}${pen(I.camera, 21)}
              <div class="publish"><button>Publish</button><button aria-label="Play">${pen(I.play, 22)}</button></div>
            </div>
          </div>
          <div class="card">
            <trading-chart></trading-chart>
            <div class="ranges">
              ${["1D", "5D", "1M", "3M", "6M", "YTD", "1Y", "5Y", "All"].map((r) => html`<button>${r}</button>`)}
              <span class="rule"></span><button>Go to...</button>
              <span class="clock">14:06:17 (UTC+1)</span><span class="rule"></span>
              <div class="scale"><button>%</button><button>log</button><button>auto</button><button aria-label="Settings">${pen(I.cog, 16)}</button></div>
            </div>
          </div>
          <div class="bar tabs">
            <button class="tab">Stock Screener ${pen(I.down, 14)}</button>
            ${tabs.map((t) => html`<button class="tab">${t}</button>`)}
            <button class="tab">Paper Trading <span class="dot"></span></button>
            <span class="grow-a"></span>
            <div class="trade">
              <span class="grip"><svg width="6" height="14" fill="#ccc">${[0, 4, 8, 12].map((y) => svg`<rect y=${y} width="2" height="2"></rect><rect x="4" y=${y} width="2" height="2"></rect>`)}</svg></span>
              <button class="quote sell"><b>SELL</b><span class="price">1.140<em>5</em><sup>2</sup></span></button>
              <span class="spread">0.1</span>
              <button class="quote buy"><b>BUY</b><span class="price">1.140<em>5</em><sup>3</sup></span></button>
              <input class="qty" aria-label="Quantity" value="900K" />
              <span class="step"><button>+</button><button>−</button></span>
            </div>
            <span class="grow-b"></span>
            <div class="end"><button aria-label="Open panel">${pen(I.up, 22)}</button><button aria-label="Maximize">${pen(I.frame, 20)}</button></div>
          </div>
        </main>
        <aside class="side right">
          <icon-rail wide .groups=${[["list", "alarm", "note", "flame", "calendar", "bulb"], ["chats", "chat", "stream", "bell"], ["depth", "dom"]]}></icon-rail>
          <div class="bottom">${pen(I.help, 24)}</div>
        </aside>
      </div>
      <button class="fold" aria-label="Collapse">‹</button>
      <aside class="toast">
        <svg class="plane" width="46" height="46"><circle cx="23" cy="23" r="23" fill="#2fa4de"></circle><path fill="#fff" d="M8 22L36 11 31 35 23 30 19 34 17 26z"></path><path fill="#b8d4e8" d="M17 26L33 14 21 28 19 34z"></path></svg>
        <h3>Matteo @ Samindicator</h3>
        <a href="#">web.telegram.org</a>
        <p>Per la sterlina sono comuni movimenti da 20 pip in 1 minuto</p>
        <svg class="x" width="28" height="28"><circle cx="14" cy="14" r="13" fill="#fff" stroke="#ccc"></circle><circle cx="14" cy="14" r="8" fill="#e0364c"></circle><path stroke="#fff" stroke-width="2" d="M11 11l6 6M17 11l-6 6"></path></svg>
      </aside>`;
  }
}
